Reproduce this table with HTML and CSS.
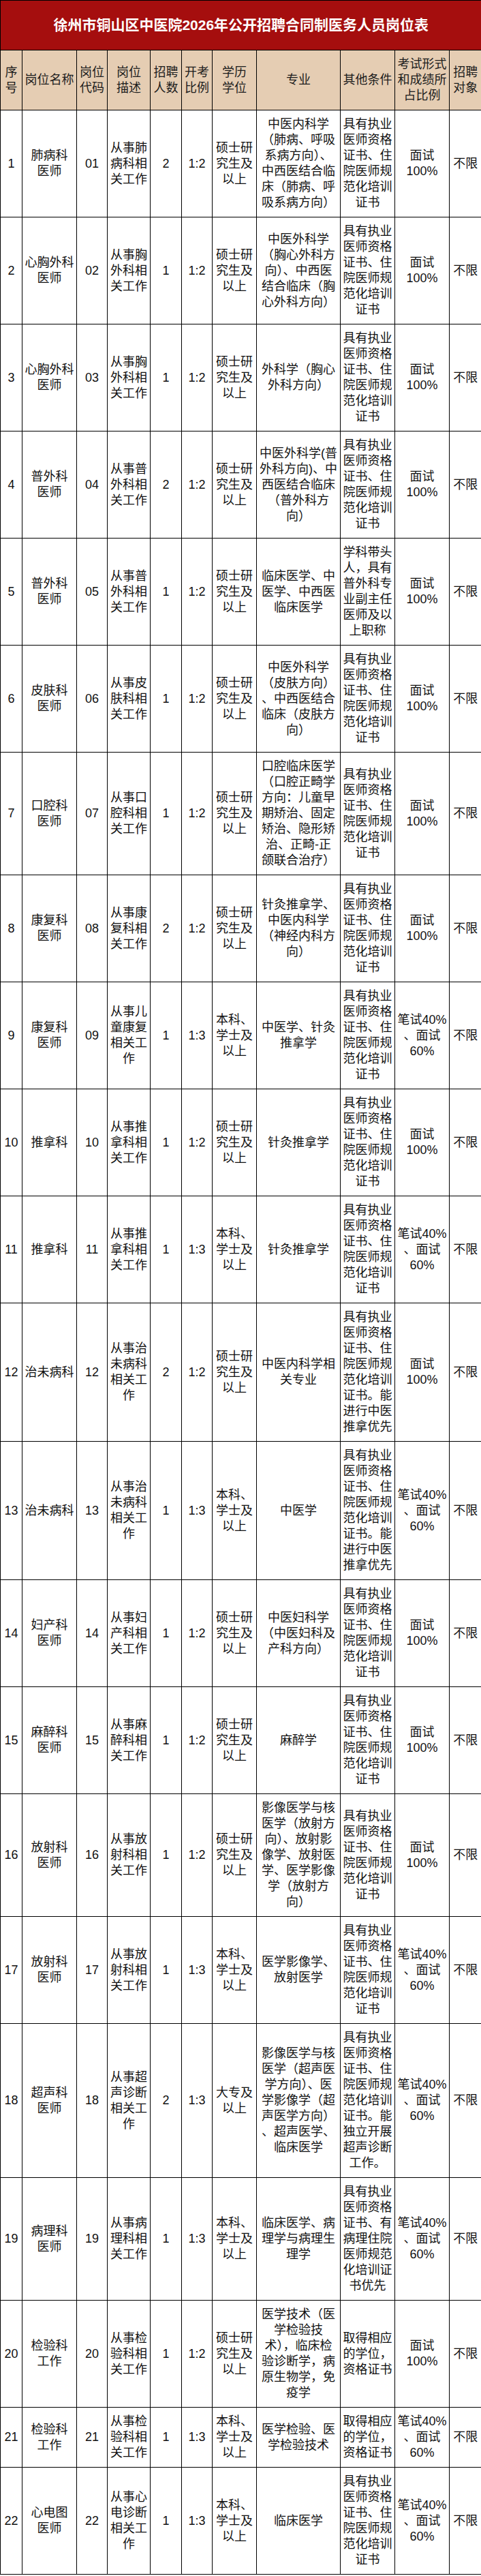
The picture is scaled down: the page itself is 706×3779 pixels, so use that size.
FILE: index.html
```html
<!DOCTYPE html>
<html lang="zh-CN">
<head>
<meta charset="utf-8">
<title>徐州市铜山区中医院2026年公开招聘合同制医务人员岗位表</title>
<link rel="stylesheet" href="styles.css">
</head>
<body>
<table class="sheet">
<colgroup>
<col class="c1"><col class="c2"><col class="c3"><col class="c4"><col class="c5"><col class="c6"><col class="c7"><col class="c8"><col class="c9"><col class="c10"><col class="c11">
</colgroup>
<thead>
<tr><th class="title" colspan="11">徐州市铜山区中医院2026年公开招聘合同制医务人员岗位表</th></tr>
<tr class="head">
<th>序<br>号</th><th>岗位名称</th><th>岗位<br>代码</th><th>岗位<br>描述</th><th>招聘<br>人数</th><th>开考<br>比例</th><th>学历<br>学位</th><th>专业</th><th>其他条件</th><th>考试形式<br>和成绩所<br>占比例</th><th>招聘<br>对象</th>
</tr>
</thead>
<tbody>
<tr><td>1</td><td>肺病科<br>医师</td><td>01</td><td>从事肺<br>病科相<br>关工作</td><td>2</td><td>1:2</td><td>硕士研<br>究生及<br>以上</td><td>中医内科学<br>（肺病、呼吸<br>系病方向）、<br>中西医结合临<br>床（肺病、呼<br>吸系病方向）</td><td>具有执业<br>医师资格<br>证书、住<br>院医师规<br>范化培训<br>证书</td><td>面试<br>100%</td><td>不限</td></tr>
<tr><td>2</td><td>心胸外科<br>医师</td><td>02</td><td>从事胸<br>外科相<br>关工作</td><td>1</td><td>1:2</td><td>硕士研<br>究生及<br>以上</td><td>中医外科学<br>（胸心外科方<br>向）、中西医<br>结合临床（胸<br>心外科方向）</td><td>具有执业<br>医师资格<br>证书、住<br>院医师规<br>范化培训<br>证书</td><td>面试<br>100%</td><td>不限</td></tr>
<tr><td>3</td><td>心胸外科<br>医师</td><td>03</td><td>从事胸<br>外科相<br>关工作</td><td>1</td><td>1:2</td><td>硕士研<br>究生及<br>以上</td><td>外科学（胸心<br>外科方向）</td><td>具有执业<br>医师资格<br>证书、住<br>院医师规<br>范化培训<br>证书</td><td>面试<br>100%</td><td>不限</td></tr>
<tr><td>4</td><td>普外科<br>医师</td><td>04</td><td>从事普<br>外科相<br>关工作</td><td>2</td><td>1:2</td><td>硕士研<br>究生及<br>以上</td><td>中医外科学(普<br>外科方向)、中<br>西医结合临床<br>（普外科方<br>向）</td><td>具有执业<br>医师资格<br>证书、住<br>院医师规<br>范化培训<br>证书</td><td>面试<br>100%</td><td>不限</td></tr>
<tr><td>5</td><td>普外科<br>医师</td><td>05</td><td>从事普<br>外科相<br>关工作</td><td>1</td><td>1:2</td><td>硕士研<br>究生及<br>以上</td><td>临床医学、中<br>医学、中西医<br>临床医学</td><td>学科带头<br>人，具有<br>普外科专<br>业副主任<br>医师及以<br>上职称</td><td>面试<br>100%</td><td>不限</td></tr>
<tr><td>6</td><td>皮肤科<br>医师</td><td>06</td><td>从事皮<br>肤科相<br>关工作</td><td>1</td><td>1:2</td><td>硕士研<br>究生及<br>以上</td><td>中医外科学<br>（皮肤方向）<br>、中西医结合<br>临床（皮肤方<br>向）</td><td>具有执业<br>医师资格<br>证书、住<br>院医师规<br>范化培训<br>证书</td><td>面试<br>100%</td><td>不限</td></tr>
<tr><td>7</td><td>口腔科<br>医师</td><td>07</td><td>从事口<br>腔科相<br>关工作</td><td>1</td><td>1:2</td><td>硕士研<br>究生及<br>以上</td><td>口腔临床医学<br>（口腔正畸学<br>方向：儿童早<br>期矫治、固定<br>矫治、隐形矫<br>治、正畸-正<br>颌联合治疗）</td><td>具有执业<br>医师资格<br>证书、住<br>院医师规<br>范化培训<br>证书</td><td>面试<br>100%</td><td>不限</td></tr>
<tr><td>8</td><td>康复科<br>医师</td><td>08</td><td>从事康<br>复科相<br>关工作</td><td>2</td><td>1:2</td><td>硕士研<br>究生及<br>以上</td><td>针灸推拿学、<br>中医内科学<br>（神经内科方<br>向）</td><td>具有执业<br>医师资格<br>证书、住<br>院医师规<br>范化培训<br>证书</td><td>面试<br>100%</td><td>不限</td></tr>
<tr><td>9</td><td>康复科<br>医师</td><td>09</td><td>从事儿<br>童康复<br>相关工<br>作</td><td>1</td><td>1:3</td><td>本科、<br>学士及<br>以上</td><td>中医学、针灸<br>推拿学</td><td>具有执业<br>医师资格<br>证书、住<br>院医师规<br>范化培训<br>证书</td><td>笔试40%<br>、面试<br>60%</td><td>不限</td></tr>
<tr><td>10</td><td>推拿科</td><td>10</td><td>从事推<br>拿科相<br>关工作</td><td>1</td><td>1:2</td><td>硕士研<br>究生及<br>以上</td><td>针灸推拿学</td><td>具有执业<br>医师资格<br>证书、住<br>院医师规<br>范化培训<br>证书</td><td>面试<br>100%</td><td>不限</td></tr>
<tr><td>11</td><td>推拿科</td><td>11</td><td>从事推<br>拿科相<br>关工作</td><td>1</td><td>1:3</td><td>本科、<br>学士及<br>以上</td><td>针灸推拿学</td><td>具有执业<br>医师资格<br>证书、住<br>院医师规<br>范化培训<br>证书</td><td>笔试40%<br>、面试<br>60%</td><td>不限</td></tr>
<tr><td>12</td><td>治未病科</td><td>12</td><td>从事治<br>未病科<br>相关工<br>作</td><td>2</td><td>1:2</td><td>硕士研<br>究生及<br>以上</td><td>中医内科学相<br>关专业</td><td>具有执业<br>医师资格<br>证书、住<br>院医师规<br>范化培训<br>证书。能<br>进行中医<br>推拿优先</td><td>面试<br>100%</td><td>不限</td></tr>
<tr><td>13</td><td>治未病科</td><td>13</td><td>从事治<br>未病科<br>相关工<br>作</td><td>1</td><td>1:3</td><td>本科、<br>学士及<br>以上</td><td>中医学</td><td>具有执业<br>医师资格<br>证书、住<br>院医师规<br>范化培训<br>证书。能<br>进行中医<br>推拿优先</td><td>笔试40%<br>、面试<br>60%</td><td>不限</td></tr>
<tr><td>14</td><td>妇产科<br>医师</td><td>14</td><td>从事妇<br>产科相<br>关工作</td><td>1</td><td>1:2</td><td>硕士研<br>究生及<br>以上</td><td>中医妇科学<br>（中医妇科及<br>产科方向）</td><td>具有执业<br>医师资格<br>证书、住<br>院医师规<br>范化培训<br>证书</td><td>面试<br>100%</td><td>不限</td></tr>
<tr><td>15</td><td>麻醉科<br>医师</td><td>15</td><td>从事麻<br>醉科相<br>关工作</td><td>1</td><td>1:2</td><td>硕士研<br>究生及<br>以上</td><td>麻醉学</td><td>具有执业<br>医师资格<br>证书、住<br>院医师规<br>范化培训<br>证书</td><td>面试<br>100%</td><td>不限</td></tr>
<tr><td>16</td><td>放射科<br>医师</td><td>16</td><td>从事放<br>射科相<br>关工作</td><td>1</td><td>1:2</td><td>硕士研<br>究生及<br>以上</td><td>影像医学与核<br>医学（放射方<br>向）、放射影<br>像学、放射医<br>学、医学影像<br>学（放射方<br>向）</td><td>具有执业<br>医师资格<br>证书、住<br>院医师规<br>范化培训<br>证书</td><td>面试<br>100%</td><td>不限</td></tr>
<tr><td>17</td><td>放射科<br>医师</td><td>17</td><td>从事放<br>射科相<br>关工作</td><td>1</td><td>1:3</td><td>本科、<br>学士及<br>以上</td><td>医学影像学、<br>放射医学</td><td>具有执业<br>医师资格<br>证书、住<br>院医师规<br>范化培训<br>证书</td><td>笔试40%<br>、面试<br>60%</td><td>不限</td></tr>
<tr><td>18</td><td>超声科<br>医师</td><td>18</td><td>从事超<br>声诊断<br>相关工<br>作</td><td>2</td><td>1:3</td><td>大专及<br>以上</td><td>影像医学与核<br>医学（超声医<br>学方向）、医<br>学影像学（超<br>声医学方向）<br>、超声医学、<br>临床医学</td><td>具有执业<br>医师资格<br>证书、住<br>院医师规<br>范化培训<br>证书。能<br>独立开展<br>超声诊断<br>工作。</td><td>笔试40%<br>、面试<br>60%</td><td>不限</td></tr>
<tr><td>19</td><td>病理科<br>医师</td><td>19</td><td>从事病<br>理科相<br>关工作</td><td>1</td><td>1:3</td><td>本科、<br>学士及<br>以上</td><td>临床医学、病<br>理学与病理生<br>理学</td><td>具有执业<br>医师资格<br>证书、有<br>病理住院<br>医师规范<br>化培训证<br>书优先</td><td>笔试40%<br>、面试<br>60%</td><td>不限</td></tr>
<tr><td>20</td><td>检验科<br>工作</td><td>20</td><td>从事检<br>验科相<br>关工作</td><td>1</td><td>1:2</td><td>硕士研<br>究生及<br>以上</td><td>医学技术（医<br>学检验技<br>术），临床检<br>验诊断学，病<br>原生物学，免<br>疫学</td><td>取得相应<br>的学位，<br>资格证书</td><td>面试<br>100%</td><td>不限</td></tr>
<tr><td>21</td><td>检验科<br>工作</td><td>21</td><td>从事检<br>验科相<br>关工作</td><td>1</td><td>1:3</td><td>本科、<br>学士及<br>以上</td><td>医学检验、医<br>学检验技术</td><td>取得相应<br>的学位，<br>资格证书</td><td>笔试40%<br>、面试<br>60%</td><td>不限</td></tr>
<tr><td>22</td><td>心电图<br>医师</td><td>22</td><td>从事心<br>电诊断<br>相关工<br>作</td><td>1</td><td>1:3</td><td>本科、<br>学士及<br>以上</td><td>临床医学</td><td>具有执业<br>医师资格<br>证书、住<br>院医师规<br>范化培训<br>证书</td><td>笔试40%<br>、面试<br>60%</td><td>不限</td></tr>
</tbody>
</table>
</body>
</html>
```

FILE: styles.css
```css
html, body {
  margin: 0;
  padding: 0;
  background: #ffffff;
}

.sheet {
  border-collapse: collapse;
  table-layout: fixed;
  width: 706px;
  border-right: hidden;
  font-family: "Liberation Sans", "Noto Sans CJK SC", sans-serif;
  font-size: 18px;
  line-height: 23px;
  color: #111111;
}

.c1 { width: 32px; }
.c2 { width: 80px; }
.c3 { width: 45px; }
.c4 { width: 63px; }
.c5 { width: 46px; }
.c6 { width: 45px; }
.c7 { width: 65px; }
.c8 { width: 123px; }
.c9 { width: 80px; }
.c10 { width: 80px; }
.c11 { width: 47px; }

.sheet th,
.sheet td {
  border: 1px solid #000000;
  padding: 9px 0;
  text-align: center;
  vertical-align: middle;
  white-space: nowrap;
  font-weight: normal;
}

.sheet .title {
  background: #a50e0e;
  color: #ffffff;
  font-weight: bold;
  font-size: 21px;
  line-height: 24px;
  height: 72px;
  padding: 0;
}

.head th {
  background: #e5cdb3;
  color: #1c1c1c;
}
```
